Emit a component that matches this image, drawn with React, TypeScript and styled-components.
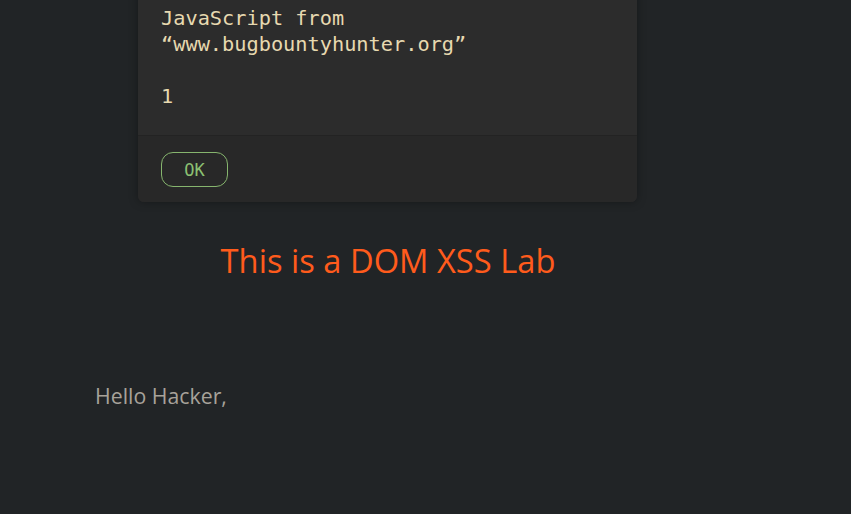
import React from "react";
import styled, { createGlobalStyle } from "styled-components";

const Global = createGlobalStyle`
  html, body { margin: 0; padding: 0; background: #212426; }
  body { overflow: hidden; }
`;

const Page = styled.div`
  position: relative;
  width: 851px;
  height: 514px;
  background: #212426;
  overflow: hidden;
`;

const Content = styled.main`
  width: 586px;
  padding: 238px 0 0 95px;
  display: flex;
  flex-direction: column;
`;

const Title = styled.h1`
  margin: 0;
  text-align: center;
  font-family: "Open Sans", "Noto Sans", sans-serif;
  font-weight: 400;
  font-size: 32.7px;
  line-height: 46px;
  color: #ff5b1c;
`;

const Greeting = styled.p`
  margin: 98px 0 0;
  font-family: "Open Sans", "Noto Sans", sans-serif;
  font-size: 21.3px;
  line-height: 28px;
  color: #a7a29a;
`;

const Dialog = styled.div`
  position: absolute;
  left: 138px;
  top: -10px;
  width: 499px;
  height: 212px;
  border-radius: 6px;
  background: #2c2c2c;
  box-shadow: 0 0 10px rgba(0, 0, 0, 0.35);
  display: flex;
  flex-direction: column;
  overflow: hidden;
`;

const DialogBody = styled.div`
  flex: 0 0 146px;
  box-sizing: border-box;
  padding: 15px 23px 0;
  font-family: "DejaVu Sans Mono", "Liberation Mono", monospace;
  font-size: 20.3px;
  line-height: 26px;
  color: #e7d9b0;
  white-space: pre-wrap;
  border-bottom: 1px solid #232323;
`;

const DialogFooter = styled.div`
  flex: 1;
  background: #282828;
  padding: 16px 23px 0;
`;

const OkButton = styled.button`
  width: 67px;
  height: 35px;
  box-sizing: border-box;
  border: 1px solid #86b56e;
  border-radius: 12px;
  background: transparent;
  color: #8cc072;
  font-family: "DejaVu Sans Mono", "Liberation Mono", monospace;
  font-size: 17px;
  padding: 0;
  cursor: pointer;
`;

export default function App() {
  return (
    <Page>
      <Global />
      <Content>
        <Title>This is a DOM XSS Lab</Title>
        <Greeting>Hello Hacker,</Greeting>
      </Content>
      <Dialog role="alertdialog">
        <DialogBody>{"JavaScript from\n“www.bugbountyhunter.org”\n\n1"}</DialogBody>
        <DialogFooter>
          <OkButton>OK</OkButton>
        </DialogFooter>
      </Dialog>
    </Page>
  );
}
